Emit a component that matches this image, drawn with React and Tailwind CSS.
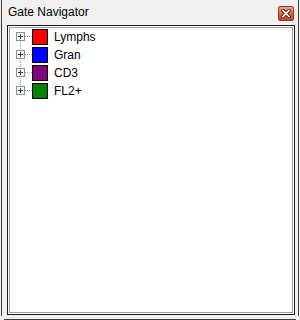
import React from "react";

const gates = [
  { name: "Lymphs", color: "bg-[#ff0000]" },
  { name: "Gran", color: "bg-[#0000ff]" },
  { name: "CD3", color: "bg-[#800080]" },
  { name: "FL2+", color: "bg-[#008000]" },
];

// expander box with the dotted tree connectors
function Expander({ first, last }) {
  return (
    <svg width="22" height="18" viewBox="0 0 22 18" className="shrink-0">
      <line
        x1="10.5"
        y1={first ? 9 : 0}
        x2="10.5"
        y2={last ? 9 : 18}
        stroke="#a0a0a0"
        strokeDasharray="1 1"
      />
      <line x1="15" y1="8.5" x2="22" y2="8.5" stroke="#a0a0a0" strokeDasharray="1 1" />
      <rect x="6.5" y="4.5" width="8" height="8" fill="#f4f4f4" stroke="#8e8f8f" />
      <rect x="7.5" y="5.5" width="6" height="6" fill="#ffffff" />
      <line x1="8" y1="8.5" x2="13" y2="8.5" stroke="#1b3d6b" />
      <line x1="10.5" y1="6" x2="10.5" y2="11" stroke="#1b3d6b" />
    </svg>
  );
}

function CloseButton() {
  return (
    <button className="mt-[6px] w-[16px] h-[15px] rounded-[2px] border border-[#8a3a25] bg-gradient-to-b from-[#eaa48f] via-[#d9694a] to-[#c6431f] flex items-center justify-center">
      <svg width="10" height="9" viewBox="0 0 10 9">
        <path d="M2 1.5 L8 7.5 M8 1.5 L2 7.5" stroke="#4a2418" strokeWidth="3.4" strokeLinecap="square" />
        <path d="M2 1.5 L8 7.5 M8 1.5 L2 7.5" stroke="#ffffff" strokeWidth="1.6" strokeLinecap="square" />
      </svg>
    </button>
  );
}

export default function App() {
  return (
    <div className="w-[300px] h-[320px] bg-[#f0f0f0] font-['Liberation_Sans',Arial,sans-serif] text-[12px] text-black">
      <div className="ml-[1px] w-[298px] h-[316px] border-x border-[#3c3c3c] flex flex-col">
        {/* Title bar */}
        <div className="h-[25px] flex items-start justify-between pl-[6px] pr-[4px]">
          <span className="mt-[5px] leading-[14px]">Gate Navigator</span>
          <CloseButton />
        </div>

        {/* Tree panel */}
        <div className="ml-[5px] mr-[3px] h-[290px] border border-[#1e1e1e] bg-white p-[1px] flex">
          <div className="flex-1 border border-[#a0a0a0] bg-white">
            {gates.map((g, i) => (
              <div key={g.name} className="h-[18px] flex items-center">
                <Expander first={i === 0} last={i === gates.length - 1} />
                <div className={`w-[16px] h-[16px] border border-black ml-[0px] ${g.color}`} />
                <span className="ml-[6px] leading-[14px]">{g.name}</span>
              </div>
            ))}
          </div>
        </div>
      </div>
      <div className="mt-[3px] ml-[4px] w-[292px] h-[1px] bg-[#3c3c3c]" />
    </div>
  );
}
